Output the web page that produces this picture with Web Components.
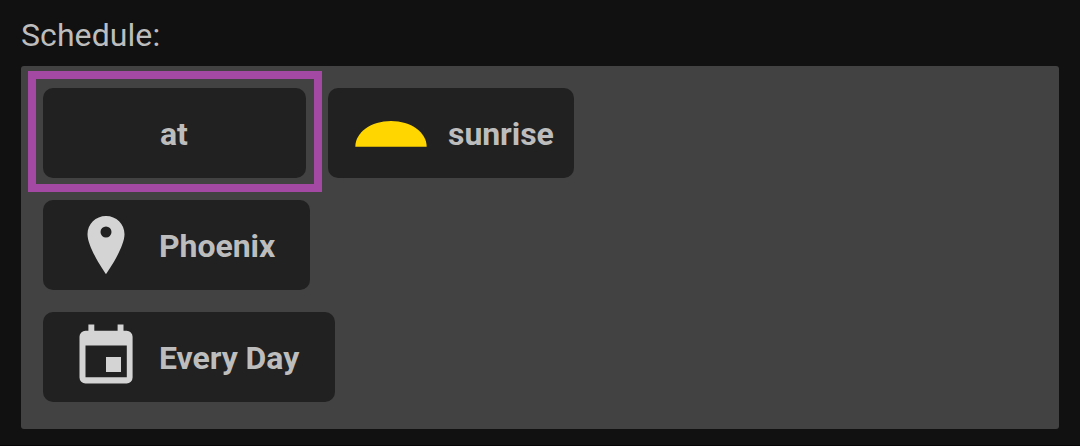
<!DOCTYPE html>
<html lang="en">
<head>
<meta charset="utf-8">
<title>Schedule</title>
<style>
body { margin: 0; height: 446px; overflow: hidden; background: #111; font-family: Roboto, sans-serif; color: #bdbdbd; }
</style>
</head>
<body>
<schedule-panel>
  <span slot="label">Schedule:</span>
  <schedule-row>
    <schedule-chip highlighted style="--w:263px;--text-x:117px">at</schedule-chip>
    <schedule-chip style="--w:246px;--text-x:120px"><schedule-icon slot="icon" name="sun"></schedule-icon>sunrise</schedule-chip>
  </schedule-row>
  <schedule-row>
    <schedule-chip style="--w:267px;--text-x:116px"><schedule-icon slot="icon" name="pin"></schedule-icon>Phoenix</schedule-chip>
  </schedule-row>
  <schedule-row>
    <schedule-chip style="--w:292px;--text-x:116px"><schedule-icon slot="icon" name="calendar"></schedule-icon>Every Day</schedule-chip>
  </schedule-row>
</schedule-panel>
<script>
const icons = {
  sun: '<path d="M27.3 58.8C27.3 44.4 43 33 63 33s35.7 11.4 35.7 25.8z" fill="#ffd600"/>',
  pin: '<path fill-rule="evenodd" d="M63 16C52.7 16 44.5 24.1 44.5 34.2C44.5 48 63 74.2 63 74.2S81.5 48 81.5 34.2C81.5 24.1 73.3 16 63 16zM63 26.5a5.5 5.5 0 1 1 0 11a5.5 5.5 0 0 1 0-11z" fill="#d4d4d4"/>',
  calendar: '<path fill-rule="evenodd" d="M45.4 12.6h5.9v6.2h23.3v-6.2h5.9v6.2h3.1a6 6 0 0 1 6 6v40.7a6 6 0 0 1-6 6H42.5a6 6 0 0 1-6-6V24.8a6 6 0 0 1 6-6h2.9zM42.5 33.4v31.9h41.3V33.4z" fill="#d4d4d4"/><path d="M63 45h15v15H63z" fill="#d4d4d4"/>'
};

customElements.define('schedule-icon', class extends HTMLElement {
  constructor() {
    super();
    this.attachShadow({ mode: 'open' });
  }
  connectedCallback() {
    this.shadowRoot.innerHTML = `<style>
      :host { display: block; width: 116px; height: 90px; }
      svg { display: block; }
    </style><svg width="116" height="90" viewBox="0 0 116 90" aria-hidden="true">${icons[this.getAttribute('name')]}</svg>`;
  }
});

customElements.define('schedule-chip', class extends HTMLElement {
  constructor() {
    super();
    this.attachShadow({ mode: 'open' }).innerHTML = `<style>
      :host { display: grid; grid-template-columns: var(--text-x) 1fr; align-items: center; position: relative;
        box-sizing: border-box; width: var(--w); height: 90px; border-radius: 10px; background: #212121;
        font-size: 32px; font-weight: 700; line-height: 40px; letter-spacing: -0.06px; white-space: nowrap; }
      :host([highlighted])::after { content: ""; position: absolute; inset: -17px -16px -14px -15px; border: 8px solid #a349a4; }
      .icon { height: 90px; }
      .text { padding-top: 2px; }
    </style><div class="icon"><slot name="icon"></slot></div><div class="text"><slot></slot></div>`;
  }
});

customElements.define('schedule-row', class extends HTMLElement {
  constructor() {
    super();
    this.attachShadow({ mode: 'open' }).innerHTML = `<style>
      :host { display: flex; gap: 22px; }
    </style><slot></slot>`;
  }
});

customElements.define('schedule-panel', class extends HTMLElement {
  constructor() {
    super();
    this.attachShadow({ mode: 'open' }).innerHTML = `<style>
      :host { display: block; box-sizing: border-box; height: 446px; padding: 15px 21px 0; border-bottom: 1px solid #080507; }
      .label { height: 51px; font-size: 32px; line-height: 40px; letter-spacing: 0.08px; }
      .box { display: flex; flex-direction: column; gap: 22px; box-sizing: border-box; height: 363px;
        padding: 22px; border-radius: 3px; background: #424242; }
    </style><div class="label"><slot name="label"></slot></div><div class="box"><slot></slot></div>`;
  }
});
</script>
</body>
</html>
